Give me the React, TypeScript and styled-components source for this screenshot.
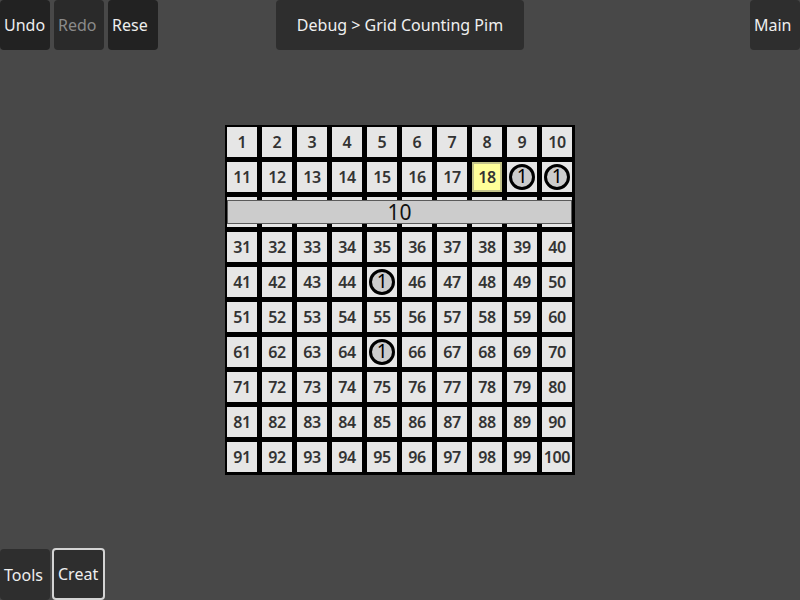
import React from "react";
import styled, { createGlobalStyle } from "styled-components";

const Global = createGlobalStyle`
  html, body { margin: 0; padding: 0; background: #484848; }
  body { font-family: "Noto Sans", "Open Sans", sans-serif; }
  #root { width: 800px; height: 600px; }
`;

const Page = styled.div`
  width: 800px;
  height: 600px;
  display: flex;
  flex-direction: column;
  background: #484848;
  overflow: hidden;
`;

const TopBar = styled.div`
  height: 50px;
  display: grid;
  grid-template-columns: 1fr 248px 1fr;
  align-items: start;
`;

const Group = styled.div<{ $end?: boolean }>`
  display: flex;
  gap: 4px;
  justify-content: ${(p) => (p.$end ? "flex-end" : "flex-start")};
`;

const Button = styled.div<{ $bg?: string; $dim?: boolean; $outlined?: boolean; $h?: number }>`
  box-sizing: border-box;
  width: ${(p) => (p.$outlined ? 53 : 50)}px;
  height: ${(p) => p.$h ?? 50}px;
  background: ${(p) => p.$bg || "#2e2e2e"};
  color: ${(p) => (p.$dim ? "#8a8a8a" : "#eeeeee")};
  border-radius: 4px;
  border: ${(p) => (p.$outlined ? "2px solid #d4d4d4" : "none")};
  font-size: 16px;
  line-height: 16px;
  padding-left: 4px;
  display: flex;
  align-items: center;
  white-space: nowrap;
  overflow: hidden;
`;

const Title = styled.div`
  height: 50px;
  background: #2e2e2e;
  color: #f0f0f0;
  border-radius: 4px;
  font-size: 16px;
  display: flex;
  align-items: center;
  justify-content: center;
`;

const Middle = styled.div`
  flex: 1;
  display: flex;
  align-items: center;
  justify-content: center;
`;

const Board = styled.div`
  position: relative;
  box-sizing: border-box;
  width: 350px;
  height: 350px;
  background: #000;
  padding: 2px;
  display: grid;
  grid-template-columns: repeat(10, 30px);
  grid-auto-rows: 30px;
  gap: 5px;
`;

const Cell = styled.div<{ $hl?: boolean }>`
  box-sizing: border-box;
  background: ${(p) => (p.$hl ? "#ffff99" : "#e6e6e6")};
  border: ${(p) => (p.$hl ? "2px solid #c4c48a" : "none")};
  color: #333333;
  font-size: 16px;
  font-weight: 600;
  display: flex;
  align-items: center;
  justify-content: center;
  letter-spacing: -0.4px;
`;

const Token = styled.div`
  box-sizing: border-box;
  width: 26px;
  height: 26px;
  border-radius: 50%;
  border: 3px solid #000;
  background: #cccccc;
  color: #000;
  font-size: 19px;
  font-weight: 400;
  line-height: 19px;
  display: flex;
  align-items: center;
  justify-content: center;
`;

const TenBar = styled.div`
  position: absolute;
  left: 2px;
  top: 75px;
  box-sizing: border-box;
  width: 345px;
  height: 24px;
  background: #cccccc;
  border: 1px solid #5a5a5a;
  color: #111;
  font-size: 21px;
  line-height: 22px;
  display: flex;
  align-items: center;
  justify-content: center;
`;

const BottomBar = styled.div`
  height: 51px;
  display: flex;
  align-items: flex-end;
  gap: 2px;
`;

const tokens = new Set([19, 20, 45, 65]);

export default function App() {
  const nums = Array.from({ length: 100 }, (_, i) => i + 1);
  return (
    <Page>
      <Global />
      <TopBar>
        <Group>
          <Button $bg="#222222">Undo</Button>
          <Button $bg="#2a2a2a" $dim>Redo</Button>
          <Button $bg="#222222">Rese</Button>
        </Group>
        <Title>Debug &gt; Grid Counting Pim</Title>
        <Group $end>
          <Button>Main</Button>
        </Group>
      </TopBar>
      <Middle>
        <Board>
          {nums.map((n) => (
            <Cell key={n} $hl={n === 18}>
              {n > 20 && n <= 30 ? null : tokens.has(n) ? <Token>1</Token> : n}
            </Cell>
          ))}
          <TenBar>10</TenBar>
        </Board>
      </Middle>
      <BottomBar>
        <Button $h={51}>Tools</Button>
        <Button $outlined $h={52}>Creat</Button>
      </BottomBar>
    </Page>
  );
}
